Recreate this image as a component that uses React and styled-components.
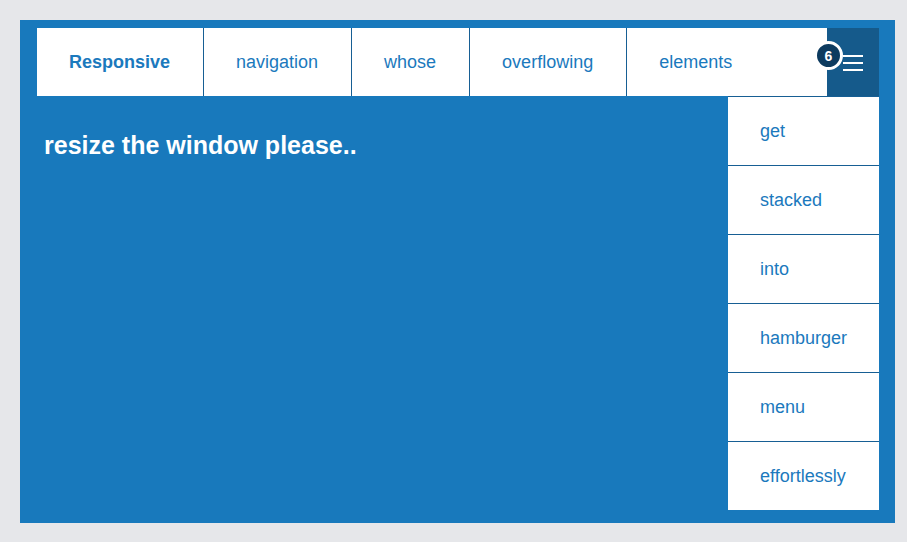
import styled, { createGlobalStyle } from 'styled-components'

const GlobalStyle = createGlobalStyle`
  html, body {
    margin: 0;
    background: #e6e7ea;
  }
  body {
    padding: 20px;
    font-family: "Liberation Sans", Arial, sans-serif;
  }
  * {
    box-sizing: border-box;
  }
`

const Frame = styled.div`
  width: 875px;
  background: #1879bc;
  padding: 8px 16px 13px 17px;
`

const Nav = styled.nav`
  display: flex;
  height: 68px;
  background: #fff;
`

const NavItem = styled.a`
  display: flex;
  align-items: center;
  padding: 0 33px 0 32px;
  font-size: 18px;
  font-weight: ${(p) => (p.$brand ? 700 : 400)};
  color: #1b79bd;
  text-decoration: none;
  border-left: ${(p) => (p.$brand ? 'none' : '1px solid #175f94')};
  flex: ${(p) => (p.$grow ? 1 : 'none')};
  width: ${(p) => (p.$brand ? '166px' : 'auto')};
  justify-content: ${(p) => (p.$brand ? 'center' : 'flex-start')};
`

const Burger = styled.button`
  position: relative;
  width: 52px;
  height: 68px;
  border: none;
  padding: 0;
  background: #155a8b;
  display: flex;
  flex-direction: column;
  justify-content: center;
  align-items: center;
  gap: 5px;
  padding-top: 1px;
`

const Line = styled.span`
  display: block;
  width: 20px;
  height: 2px;
  background: #fff;
`

const Badge = styled.span`
  position: absolute;
  left: -13px;
  top: 13px;
  width: 29px;
  height: 29px;
  border-radius: 50%;
  background: #0d3b5f;
  border: 3px solid #fff;
  color: #fff;
  font-size: 14px;
  font-weight: 700;
  display: flex;
  align-items: center;
  justify-content: center;
  line-height: 1;
`

const Body = styled.div`
  display: flex;
  align-items: flex-start;
`

const Heading = styled.h1`
  flex: 1;
  margin: 0;
  padding: 35px 0 0 7px;
  font-size: 25px;
  font-weight: 700;
  color: #fff;
`

const Menu = styled.ul`
  list-style: none;
  margin: 0;
  padding: 0;
  width: 151px;
`

const MenuItem = styled.li`
  height: 69px;
  border-top: 1px solid #175f94;
  background: #fff;
  display: flex;
  align-items: center;
  padding: 0 32px;
  font-size: 18px;
  color: #1b79bd;
`

const navLinks = ['navigation', 'whose', 'overflowing']
const hidden = ['get', 'stacked', 'into', 'hamburger', 'menu', 'effortlessly']

export default function App() {
  return (
    <>
      <GlobalStyle />
      <Frame>
        <Nav>
          <NavItem $brand>Responsive</NavItem>
          {navLinks.map((l) => (
            <NavItem key={l}>{l}</NavItem>
          ))}
          <NavItem $grow>elements</NavItem>
          <Burger aria-label="menu">
            <Badge>{hidden.length}</Badge>
            <Line />
            <Line />
            <Line />
          </Burger>
        </Nav>
        <Body>
          <Heading>resize the window please..</Heading>
          <Menu>
            {hidden.map((h) => (
              <MenuItem key={h}>{h}</MenuItem>
            ))}
          </Menu>
        </Body>
      </Frame>
    </>
  )
}
